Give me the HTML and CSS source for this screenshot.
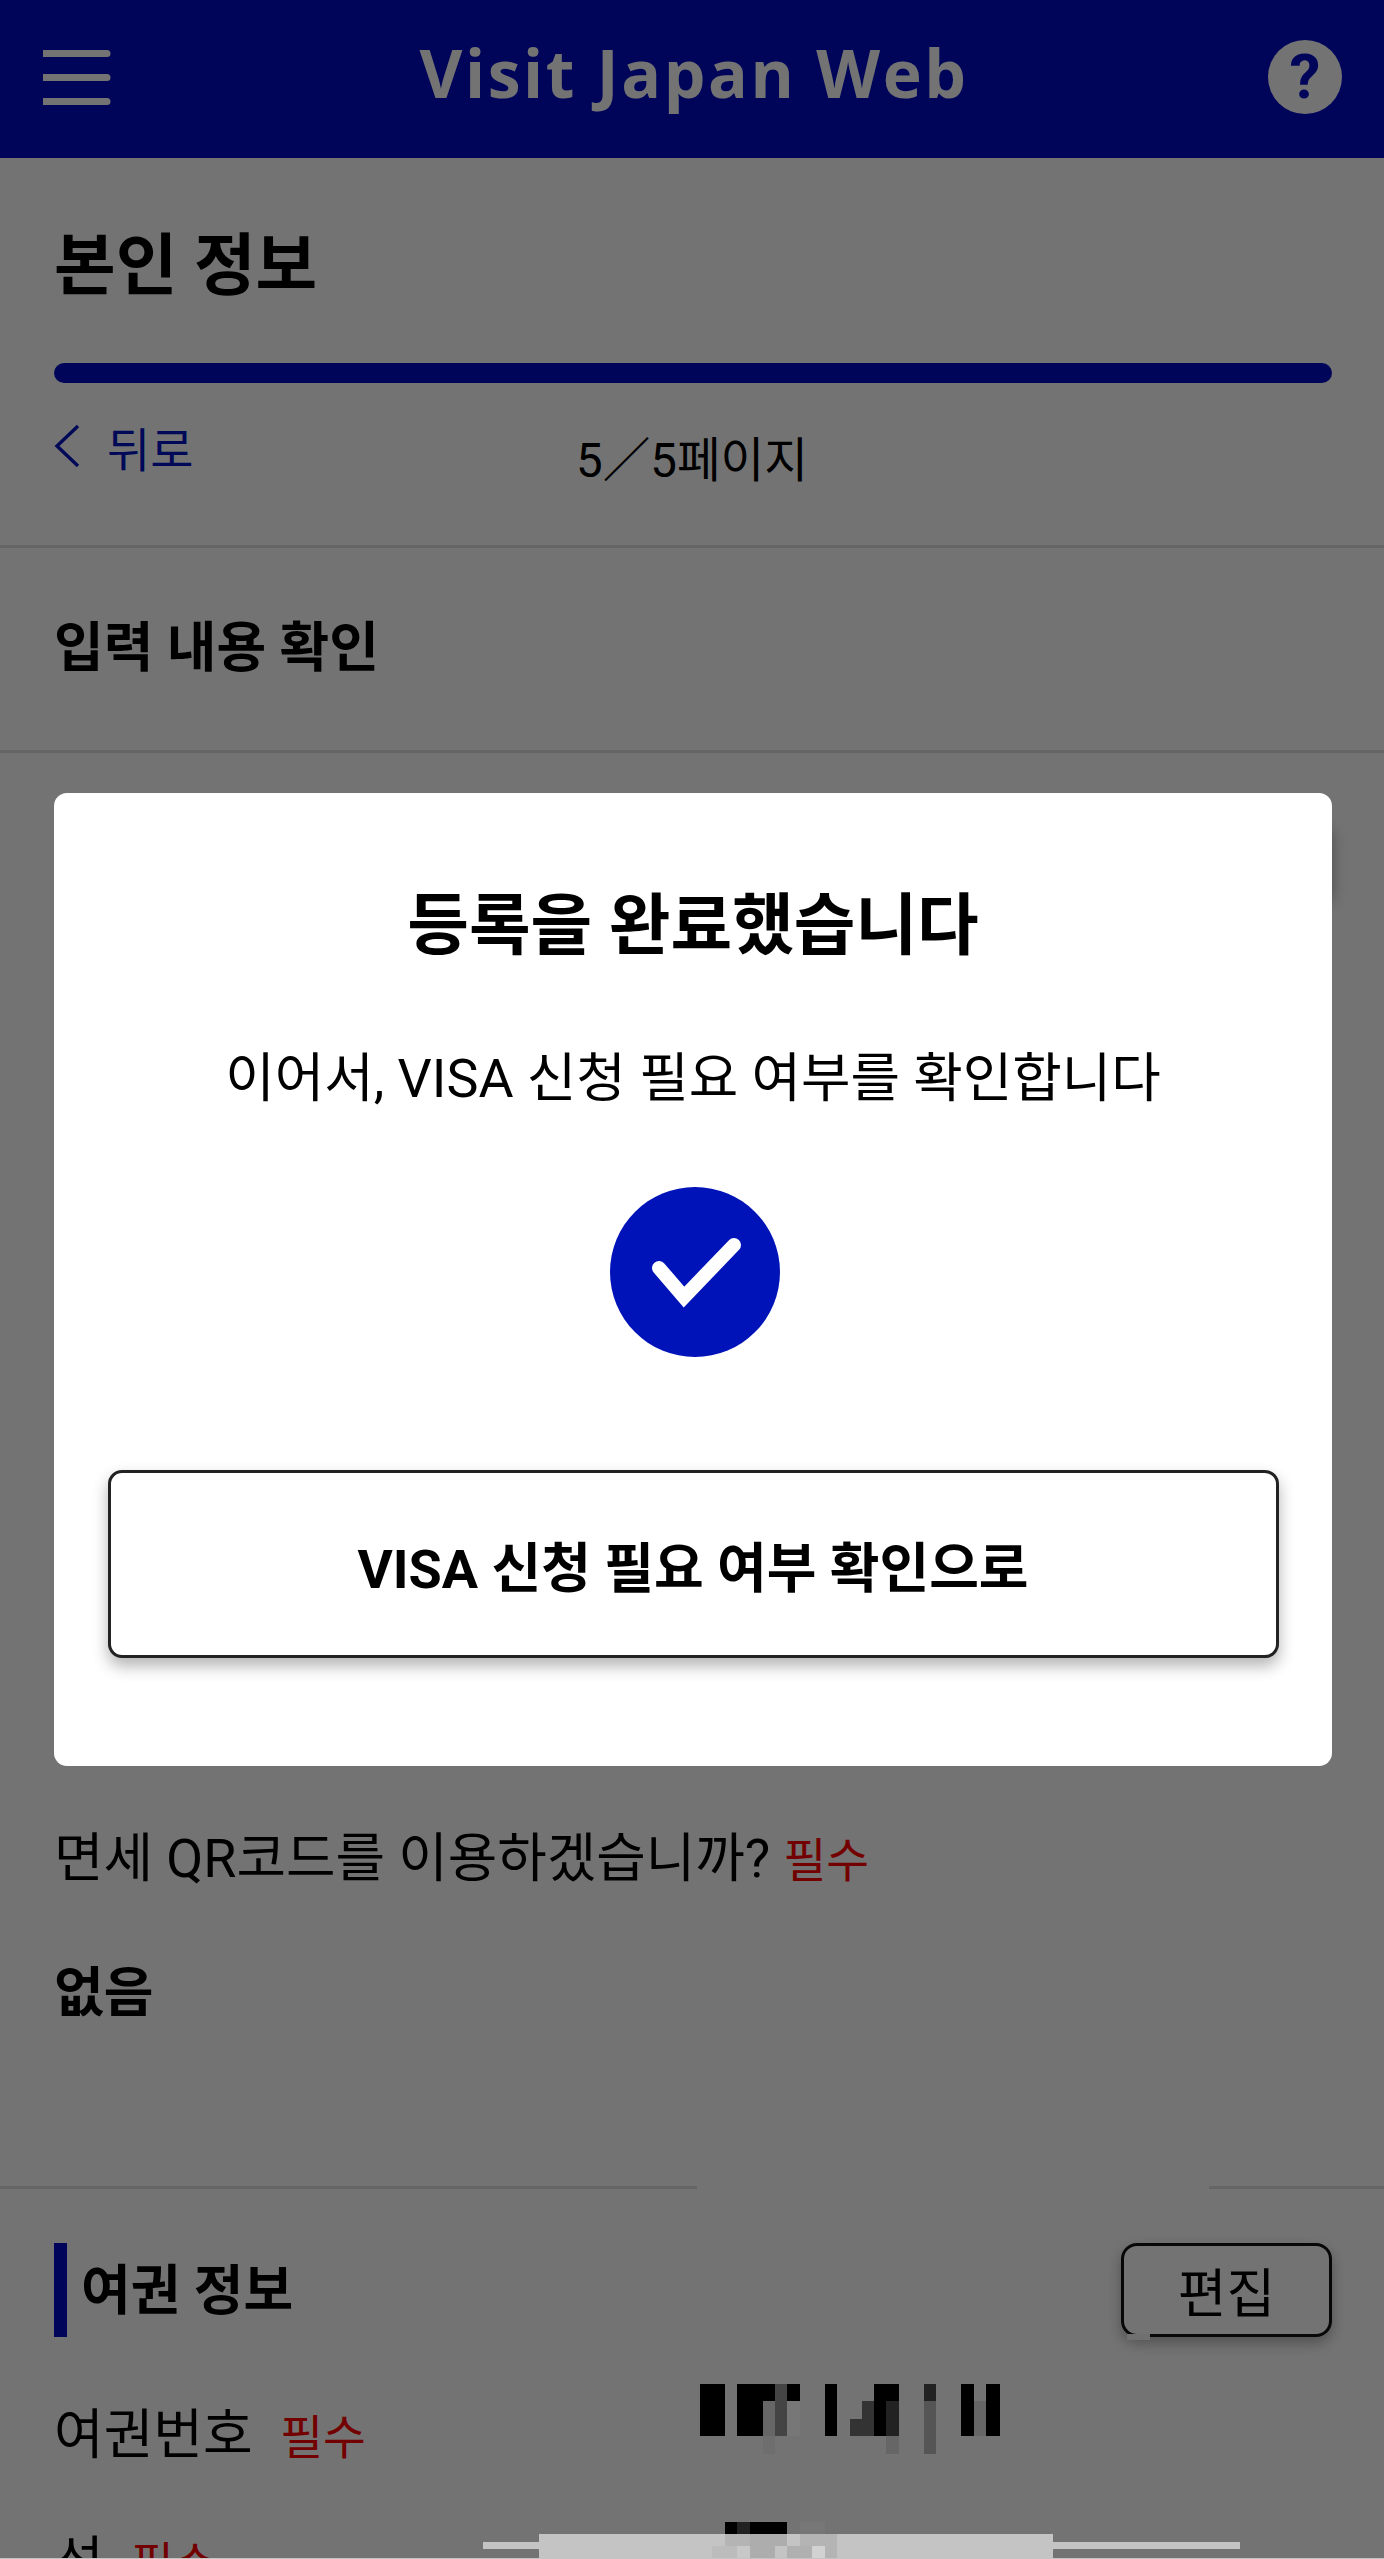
FILE: index.html
```html
<!DOCTYPE html>
<html lang="ko">
<head>
    <meta charset="UTF-8">
    <meta name="viewport" content="width=device-width, initial-scale=1.0">
    <title>Visit Japan Web</title>
    <link rel="stylesheet" href="styles.css">
</head>
<body>
    <header class="top-bar">
        <svg class="menu-icon" width="68" height="55" viewBox="0 0 68 55">
            <path d="M0 0H64a3.5 3.5 0 0 1 0 7H0Z M0 24H64a3.5 3.5 0 0 1 0 7H0Z M0 48H64a3.5 3.5 0 0 1 0 7H0Z" fill="#fff"/>
        </svg>
        <div class="brand">Visit Japan Web</div>
        <div class="help-icon">?</div>
    </header>

    <main>
        <h1 class="page-title">본인 정보</h1>
        <div class="progress"></div>
        <div class="step-row">
            <a class="back-link">
                <svg width="26" height="44" viewBox="0 0 26 44">
                    <path d="M24 2L3 22L24 42" fill="none" stroke="#0013c4" stroke-width="3.4"/>
                </svg>
                <span>뒤로</span>
            </a>
            <div class="step-count">5／5페이지</div>
        </div>
        <h2 class="confirm-title">입력 내용 확인</h2>

        <div class="fields">
            <div class="card-behind"></div>
            <p class="field-label">면세 QR코드를 이용하겠습니까? <span class="required">필수</span></p>
            <p class="field-value">없음</p>
        </div>

        <section class="passport">
            <div class="section-head">
                <h3 class="section-title">여권 정보</h3>
                <button class="edit-button">편집</button>
            </div>
            <p class="passport-row">여권번호 <span class="required">필수</span></p>
            <p class="passport-row surname">성 <span class="required">필수</span></p>
        </section>
    </main>

    <div class="overlay">
        <div class="modal">
            <h2 class="modal-title">등록을 완료했습니다</h2>
            <p class="modal-text">이어서, VISA 신청 필요 여부를 확인합니다</p>
            <svg class="check" width="170" height="170" viewBox="0 0 170 170">
                <circle cx="85" cy="85" r="85" fill="#0013b8"/>
                <path d="M49 81L74 110L124 58" fill="none" stroke="#fff" stroke-width="14" stroke-linecap="round" stroke-linejoin="miter"/>
            </svg>
            <button class="next-button">VISA 신청 필요 여부 확인으로</button>
        </div>
    </div>

    <!-- blanked parts of the capture, they sit on top of the dimmed page -->
    <div class="line-patch"></div>
    <div class="edit-patch"></div>
    <svg class="mosaic mosaic-number" width="300" height="72" viewBox="0 0 300 72" shape-rendering="crispEdges">
        <rect x="0" y="0" width="25" height="52" fill="#000"/>
        <rect x="37" y="0" width="26" height="52" fill="#000"/>
        <rect x="63" y="0" width="12" height="17" fill="#000"/>
        <rect x="63" y="17" width="12" height="35" fill="#666"/>
        <rect x="63" y="52" width="12" height="18" fill="#6e6e6e"/>
        <rect x="75" y="0" width="12" height="52" fill="#444"/>
        <rect x="87" y="0" width="13" height="17" fill="#000"/>
        <rect x="87" y="17" width="13" height="35" fill="#777"/>
        <rect x="125" y="0" width="12" height="52" fill="#000"/>
        <rect x="162" y="17" width="12" height="35" fill="#333"/>
        <rect x="150" y="35" width="12" height="17" fill="#333"/>
        <rect x="174" y="0" width="12" height="52" fill="#000"/>
        <rect x="186" y="0" width="13" height="17" fill="#000"/>
        <rect x="186" y="17" width="13" height="35" fill="#222"/>
        <rect x="186" y="52" width="13" height="18" fill="#666"/>
        <rect x="224" y="0" width="12" height="17" fill="#222"/>
        <rect x="224" y="17" width="12" height="53" fill="#555"/>
        <rect x="261" y="0" width="13" height="52" fill="#000"/>
        <rect x="274" y="17" width="12" height="35" fill="#666"/>
        <rect x="286" y="0" width="14" height="52" fill="#000"/>
    </svg>
    <div class="nav-thin"></div>
    <div class="nav-thick"></div>
    <svg class="mosaic mosaic-name" width="130" height="37" viewBox="0 0 130 37" shape-rendering="crispEdges">
        <rect x="13" y="0" width="12" height="12" fill="#000"/>
        <rect x="25" y="0" width="13" height="12" fill="#222"/>
        <rect x="38" y="0" width="37" height="12" fill="#000"/>
        <rect x="88" y="0" width="25" height="12" fill="#777"/>
        <rect x="13" y="12" width="25" height="12" fill="#b4b4b4"/>
        <rect x="38" y="12" width="37" height="12" fill="#adadad"/>
        <rect x="88" y="12" width="37" height="12" fill="#b4b4b4"/>
        <rect x="0" y="24" width="25" height="13" fill="#bcbcbc"/>
        <rect x="25" y="24" width="13" height="13" fill="#c8c8c8"/>
        <rect x="38" y="24" width="25" height="13" fill="#adadad"/>
        <rect x="75" y="24" width="25" height="13" fill="#b0b0b0"/>
        <rect x="100" y="24" width="13" height="13" fill="#d2d2d2"/>
        <rect x="113" y="24" width="12" height="13" fill="#b4b4b4"/>
    </svg>
    <div class="bottom-edge"></div>
</body>
</html>
```

FILE: styles.css
```css
* {
    box-sizing: border-box;
}
html, body {
    margin: 0;
    height: 2559px;
    overflow: hidden;
}
body {
    position: relative;
    background-color: #FFFFFF;
    color: #000000;
    font-family: Roboto, "Noto Sans CJK KR", sans-serif;
}
h1, h2, h3, p {
    margin: 0;
}

.top-bar {
    height: 158px;
    padding: 50px 42px 0 43px;
    display: flex;
    justify-content: space-between;
    align-items: flex-start;
    background-color: #000DC8;
    color: #FFFFFF;
}
.brand {
    margin-top: -23px;
    margin-left: 9px;
    font-family: "Open Sans", sans-serif;
    font-size: 66px;
    line-height: 90px;
    font-weight: 700;
    letter-spacing: 2.6px;
}
.help-icon {
    width: 74px;
    height: 74px;
    margin-top: -10px;
    border-radius: 50%;
    background-color: #FFFFFF;
    color: #000DC8;
    font-size: 62px;
    line-height: 74px;
    font-weight: 700;
    text-align: center;
}

.page-title {
    padding: 71px 54px 0;
    font-size: 67px;
    line-height: 74px;
    font-weight: 700;
}
.progress {
    height: 20px;
    margin: 60px 52px 0 54px;
    border-radius: 10px;
    background-color: #000DC8;
}
.step-row {
    height: 165px;
    padding: 33px 54px 0;
    display: grid;
    grid-template-columns: 1fr auto 1fr;
    border-bottom: 3px solid #DFDFDF;
}
.back-link {
    display: flex;
    align-items: center;
    gap: 27px;
    height: 60px;
    color: #0013C4;
    font-size: 47px;
}
.step-count {
    margin-top: 15px;
    font-size: 47.5px;
    line-height: 60px;
}
.confirm-title {
    height: 205px;
    padding: 0 54px;
    border-bottom: 3px solid #DFDFDF;
    font-size: 54px;
    line-height: 202px;
    font-weight: 700;
}

.fields {
    position: relative;
    height: 1436px;
    padding: 1071px 54px 0;
    border-bottom: 3px solid #DFDFDF;
}
/* a card of the page that is mostly hidden by the dialog, only its shadow shows */
.card-behind {
    position: absolute;
    left: 80px;
    right: 52px;
    top: 78px;
    height: 70px;
    background-color: #FFFFFF;
    box-shadow: 0 0 14px rgba(0, 0, 0, 0.35);
}
.field-label {
    font-size: 53.8px;
    line-height: 70px;
}
.required {
    color: #FF0000;
    font-size: 46.5px;
}
.field-value {
    margin-top: 63px;
    font-size: 54px;
    line-height: 70px;
    font-weight: 700;
}

.passport {
    padding: 54px 52px 0 54px;
}
.section-head {
    display: flex;
    justify-content: space-between;
    height: 94px;
}
.section-title {
    padding-left: 14px;
    border-left: 13px solid #000DC8;
    font-size: 54px;
    line-height: 98px;
    font-weight: 700;
}
.edit-button {
    width: 211px;
    height: 94px;
    padding: 0;
    background-color: #FFFFFF;
    border: 3px solid #111111;
    border-radius: 16px;
    box-shadow: 0 6px 14px rgba(0, 0, 0, 0.3);
    font-family: inherit;
    font-size: 53px;
}
.passport-row {
    margin-top: 64px;
    font-size: 54px;
    line-height: 70px;
}
.passport-row .required {
    margin-left: 14px;
}
.surname {
    margin-top: 55px;
}

.overlay {
    position: absolute;
    inset: 0;
    background-color: rgba(0, 0, 0, 0.55);
}
.modal {
    position: absolute;
    left: 54px;
    top: 793px;
    width: 1278px;
    padding: 95px 53px 108px;
    display: flex;
    flex-direction: column;
    align-items: center;
    background-color: #FFFFFF;
    border-radius: 13px;
}
.modal-title {
    font-size: 67px;
    line-height: 76px;
    font-weight: 700;
}
.modal-text {
    margin-top: 80px;
    font-size: 53.8px;
    line-height: 70px;
}
.check {
    margin-top: 73px;
    margin-left: 4px;
}
.next-button {
    width: 1171px;
    height: 188px;
    margin-top: 113px;
    background-color: #FFFFFF;
    border: 3px solid #222222;
    border-radius: 14px;
    box-shadow: 0 8px 16px rgba(0, 0, 0, 0.3);
    font-family: inherit;
    font-size: 54px;
    font-weight: 700;
}

.line-patch {
    position: absolute;
    left: 697px;
    top: 2186px;
    width: 512px;
    height: 5px;
    background-color: #737373;
}
.edit-patch {
    position: absolute;
    left: 1127px;
    top: 2334px;
    width: 23px;
    height: 6px;
    background-color: #707070;
}
.mosaic {
    position: absolute;
    display: block;
}
.mosaic-number {
    left: 700px;
    top: 2384px;
}
.nav-thin {
    position: absolute;
    left: 483px;
    top: 2542px;
    width: 757px;
    height: 7px;
    background-color: #C4C4C4;
}
.nav-thick {
    position: absolute;
    left: 539px;
    top: 2534px;
    width: 514px;
    height: 25px;
    background-color: #C4C4C4;
}
.mosaic-name {
    left: 712px;
    top: 2522px;
}
.bottom-edge {
    position: absolute;
    left: 0;
    right: 0;
    bottom: 0;
    height: 1px;
    background-color: #C4C4C4;
}
```
